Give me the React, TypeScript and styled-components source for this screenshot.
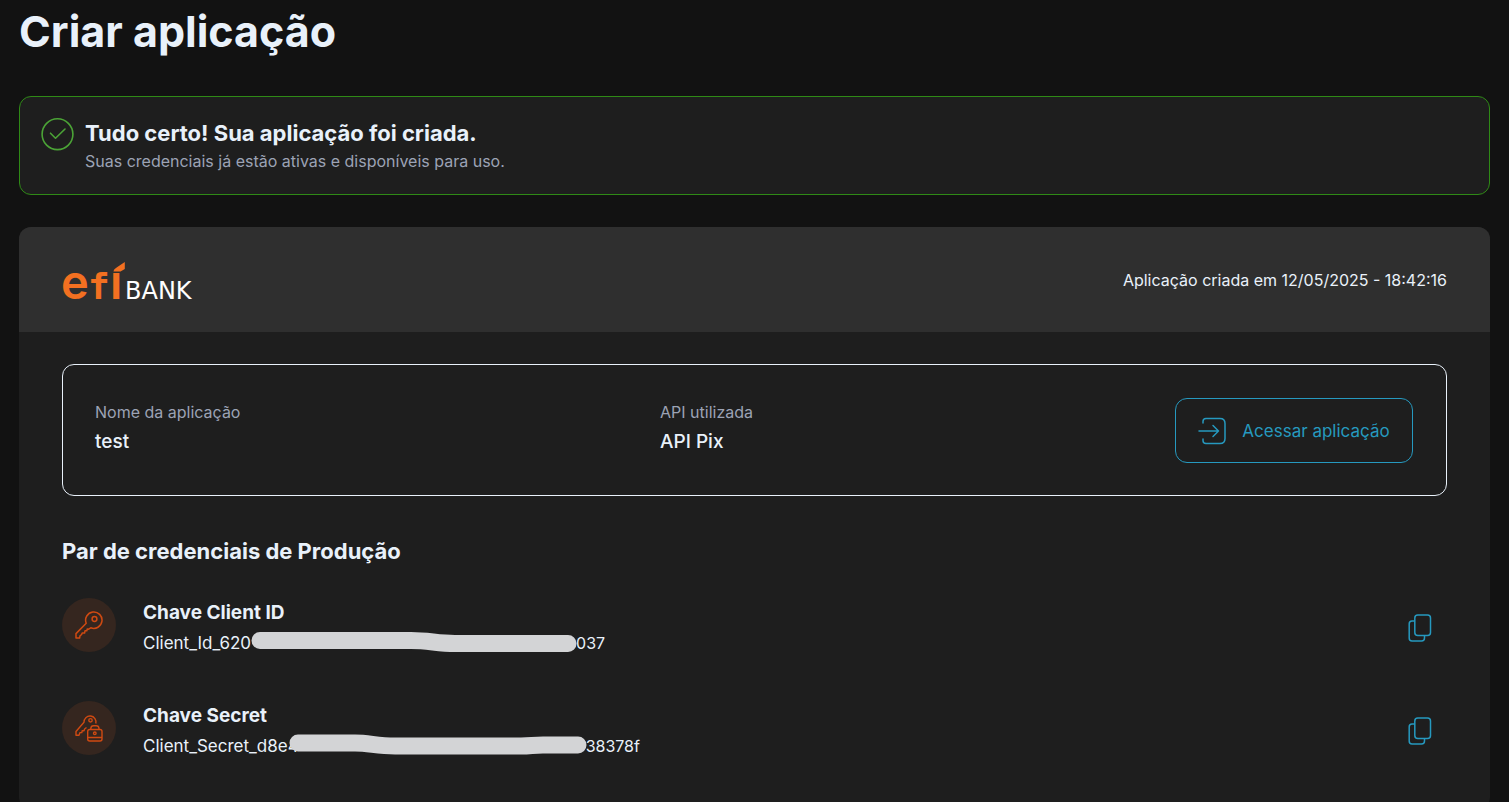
import React from 'react';
import styled, { createGlobalStyle } from 'styled-components';

const GlobalStyle = createGlobalStyle`
  * { box-sizing: border-box; }
  body {
    margin: 0;
    background: #121212;
    color: #e9f1fa;
    font-family: Inter, "Liberation Sans", sans-serif;
    font-size: 16px;
    line-height: 24px;
  }
  h1, h2, h3, p, dl, dt, dd, ul { margin: 0; padding: 0; }
`;

const Page = styled.main`
  padding: 0 19px;
`;

const PageTitle = styled.h1`
  padding: 3px 0 37px;
  font-size: 43px;
  line-height: 56px;
  font-weight: 700;
`;

const SuccessAlert = styled.section`
  display: flex;
  gap: 11px;
  padding: 21px 21px 20px;
  border: 1px solid #2f8a16;
  border-radius: 12px;
  background: #1e1e1e;
  svg { flex: none; }
`;

const AlertTitle = styled.h2`
  font-size: 22px;
  line-height: 30px;
  font-weight: 700;
`;

const AlertText = styled.p`
  color: #9ca3b5;
  font-size: 16px;
  line-height: 26px;
`;

const Card = styled.section`
  margin-top: 32px;
  border-radius: 12px;
  background: #1e1e1e;
  overflow: hidden;
`;

const CardHeader = styled.header`
  display: flex;
  align-items: center;
  justify-content: space-between;
  min-height: 105px;
  padding: 0 43px;
  background: #2f2f2f;
`;

const CardBody = styled.div`
  padding: 32px 43px 48px;
`;

const Summary = styled.div`
  display: flex;
  align-items: flex-start;
  min-height: 132px;
  padding: 33px 33px 32px 32px;
  border: 1px solid #e9f1fa;
  border-radius: 12px;
`;

const SummaryList = styled.dl`
  display: grid;
  grid-template-columns: 565px 1fr;
  flex: 1;
`;

const SummaryLabel = styled.dt`
  color: #9ca3b5;
  font-size: 16px;
  line-height: 28px;
`;

const SummaryValue = styled.dd`
  font-size: 19px;
  line-height: 32px;
  font-weight: 500;
`;

const AccessButton = styled.button`
  display: flex;
  align-items: center;
  justify-content: center;
  gap: 16px;
  width: 238px;
  height: 65px;
  padding: 0;
  border: 1px solid #2699bf;
  border-radius: 12px;
  background: transparent;
  color: #2699bf;
  font: inherit;
  font-size: 17px;
  white-space: nowrap;
  cursor: pointer;
`;

const SectionTitle = styled.h2`
  margin-top: 39px;
  font-size: 22px;
  line-height: 32px;
  font-weight: 700;
`;

const CredentialList = styled.ul`
  display: grid;
  gap: 43px;
  margin-top: 31px;
  list-style: none;
`;

const Credential = styled.li`
  display: flex;
  align-items: flex-start;
  height: 60px;
`;

const IconCircle = styled.span`
  display: grid;
  place-items: center;
  flex: none;
  width: 54px;
  height: 54px;
  margin-right: 27px;
  border-radius: 50%;
  background: #35261f;
`;

const CredentialInfo = styled.div`
  flex: 1;
`;

const CredentialName = styled.h3`
  font-size: 19px;
  line-height: 30px;
  font-weight: 700;
`;

const CredentialValue = styled.p`
  display: flex;
  align-items: center;
  height: 30px;
`;

const ValueStart = styled.span`
  font-size: 17px;
`;

const Mask = styled.svg<{ $overlap: number }>`
  position: relative;
  flex: none;
  margin: 0 -1px 0 ${(p) => -p.$overlap}px;
`;

const CopyButton = styled.button`
  display: grid;
  place-items: center;
  width: 54px;
  height: 60px;
  padding: 0;
  border: 0;
  background: transparent;
  color: #2699bf;
  cursor: pointer;
`;

const BrandText = styled.text`
  font-family: Inter, sans-serif;
`;

const BrandF = styled.tspan`
  font-family: "DejaVu Sans Mono", monospace;
`;

const BankText = styled.text`
  font-family: "DejaVu Sans", sans-serif;
`;

const Logo = () => (
  <svg width="140" height="72" viewBox="0 0 140 72" role="img" aria-label="Efí Bank">
    <BrandText fill="#f37021" fontSize="47" fontWeight="600" y="55">
      <tspan x="-1">e</tspan>
      <BrandF x="26" fontSize="36" fontWeight="700">f</BrandF>
      <tspan x="48">ı</tspan>
    </BrandText>
    <path d="M51.500 27.500C52 25.500 53 24.500 55 23.300L62.800 18V25L58.500 27.500Z" fill="#f37021" />
    <BankText fill="#ffffff" fontSize="24" x="63" y="55" letterSpacing="0">
      <tspan>BANK</tspan>
    </BankText>
  </svg>
);

const CheckIcon = () => (
  <svg width="33" height="33" viewBox="0 0 33 33" fill="none" stroke="#4ba336" strokeWidth="1.6" strokeLinecap="round" strokeLinejoin="round" aria-hidden="true">
    <circle cx="16.500" cy="16.200" r="15.400" />
    <path d="M9.5 15.2 14.500 20.200 24 11" />
  </svg>
);

const EnterIcon = () => (
  <svg width="28" height="28" viewBox="0 0 28 28" fill="none" stroke="currentColor" strokeWidth="1.5" strokeLinecap="round" strokeLinejoin="round" aria-hidden="true">
    <path d="M5 6V4.500Q5 1.500 8 1.500H22Q27 1.500 27 6.500V21.500Q27 26.500 22 26.500H8Q5 26.500 5 23.500V22" />
    <path d="M1 14H20.500M15 8.500 20.500 14 15 19.500" />
  </svg>
);

const KeyIcon = () => (
  <svg width="28" height="28" viewBox="0 0 28 28" fill="none" stroke="#cf4a12" strokeWidth="1.500" strokeLinejoin="round" aria-hidden="true">
    <path d="M11.200 12.200A8.200 8.200 0 1 1 15.800 16.800L13.600 18.200 12.200 18 11.800 19.800 10 19.800 9.600 22 7.200 22 6.600 23.500 5 24.800 4.600 27H1V22.600Z" />
    <circle cx="19.500" cy="8" r="2.400" />
  </svg>
);

const KeyLockIcon = () => (
  <svg width="28" height="28" viewBox="0 0 28 28" fill="none" stroke="#cf4a12" strokeWidth="1.400" strokeLinejoin="round" aria-hidden="true">
    <path d="M20.800 9.500A6 6 0 1 0 9 8.300L1 17.500V21.200H4L5 18.600H6.800L7.200 16.700H9L9.600 15 11.500 13.500" />
    <circle cx="15.500" cy="6.300" r="1.700" />
    <rect x="12.700" y="15.500" width="14.300" height="11.500" rx="2" />
    <path d="M15.800 15.500V14.500Q16 11.800 18.500 11.800H21.200Q23.800 11.800 24 14.500V15.500M12.700 23.500H27" />
    <circle cx="19.800" cy="19.300" r="1.300" />
  </svg>
);

const CopyIcon = () => (
  <svg width="24" height="28" viewBox="0 0 24 28" fill="none" stroke="currentColor" strokeWidth="1.500" strokeLinejoin="round" aria-hidden="true">
    <rect x="6.800" y="1" width="15.700" height="20.500" rx="3" />
    <path d="M6.800 7H4Q1.200 7 1.200 10V24Q1.200 27 4 27H13.500Q16.500 27 16.500 24V21.500" />
  </svg>
);

type CredentialRowProps = {
  name: string;
  start: string;
  end: string;
  icon: React.ReactNode;
  maskWidth: number;
  maskPath: string;
  overlap: number;
};

const CredentialRow = ({ name, start, end, icon, maskWidth, maskPath, overlap }: CredentialRowProps) => (
  <Credential>
    <IconCircle>{icon}</IconCircle>
    <CredentialInfo>
      <CredentialName>{name}</CredentialName>
      <CredentialValue>
        <ValueStart>{start}</ValueStart>
        <Mask $overlap={overlap} width={maskWidth} height="24" viewBox={`0 0 ${maskWidth} 24`} aria-hidden="true">
          <path d={maskPath} fill="none" stroke="#d3d4d6" strokeWidth="17" strokeLinecap="round" strokeLinejoin="round" />
        </Mask>
        <span>{end}</span>
      </CredentialValue>
    </CredentialInfo>
    <CopyButton type="button" aria-label={`Copiar ${name}`}>
      <CopyIcon />
    </CopyButton>
  </Credential>
);

export default function App() {
  return (
    <Page>
      <GlobalStyle />
      <PageTitle>Criar aplicação</PageTitle>
      <SuccessAlert role="status">
        <CheckIcon />
        <div>
          <AlertTitle>Tudo certo! Sua aplicação foi criada.</AlertTitle>
          <AlertText>Suas credenciais já estão ativas e disponíveis para uso.</AlertText>
        </div>
      </SuccessAlert>
      <Card>
        <CardHeader>
          <Logo />
          <p>Aplicação criada em 12/05/2025 - 18:42:16</p>
        </CardHeader>
        <CardBody>
          <Summary>
            <SummaryList>
              <div>
                <SummaryLabel>Nome da aplicação</SummaryLabel>
                <SummaryValue>test</SummaryValue>
              </div>
              <div>
                <SummaryLabel>API utilizada</SummaryLabel>
                <SummaryValue>API Pix</SummaryValue>
              </div>
            </SummaryList>
            <AccessButton type="button">
              <EnterIcon />
              Acessar aplicação
            </AccessButton>
          </Summary>
          <SectionTitle>Par de credenciais de Produção</SectionTitle>
          <CredentialList>
            <CredentialRow
              name="Chave Client ID"
              start="Client_Id_620"
              end="037"
              icon={<KeyIcon />}
              maskWidth={326}
              maskPath="M9 9.500H160C178 9.500 186 12.500 204 12.500H317"
              overlap={0}
            />
            <CredentialRow
              name="Chave Secret"
              start="Client_Secret_d8e4"
              end="38378f"
              icon={<KeyLockIcon />}
              maskWidth={298}
              maskPath="M9 9H66C80 9 88 12 106 12H232C242 12 244 11 254 11H289"
              overlap={10}
            />
          </CredentialList>
        </CardBody>
      </Card>
    </Page>
  );
}
